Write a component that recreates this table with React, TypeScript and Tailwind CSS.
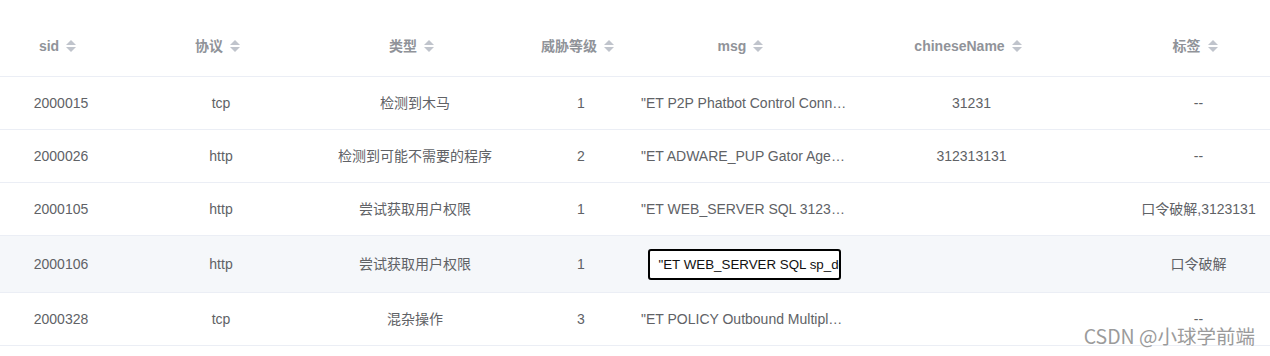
const columns = [
  { key: 'sid', label: 'sid' },
  { key: 'protocol', label: '协议' },
  { key: 'type', label: '类型' },
  { key: 'level', label: '威胁等级' },
  { key: 'msg', label: 'msg' },
  { key: 'chineseName', label: 'chineseName' },
  { key: 'tag', label: '标签' },
];

const rows = [
  { sid: '2000015', protocol: 'tcp', type: '检测到木马', level: '1', msg: '"ET P2P Phatbot Control Connect"', chineseName: '31231', tag: '--' },
  { sid: '2000026', protocol: 'http', type: '检测到可能不需要的程序', level: '2', msg: '"ET ADWARE_PUP Gator Agent Traffic"', chineseName: '312313131', tag: '--' },
  { sid: '2000105', protocol: 'http', type: '尝试获取用户权限', level: '1', msg: '"ET WEB_SERVER SQL 3123131312"', chineseName: '', tag: '口令破解,3123131' },
  { sid: '2000106', protocol: 'http', type: '尝试获取用户权限', level: '1', msg: '"ET WEB_SERVER SQL sp_delete_alert"', chineseName: '', tag: '口令破解', editing: true },
  { sid: '2000328', protocol: 'tcp', type: '混杂操作', level: '3', msg: '"ET POLICY Outbound Multiple Non-SMTP Server Emails"', chineseName: '', tag: '--' },
];

const gridCols = 'grid grid-cols-[122px_198px_190px_142px_184px_291px_143px]';

function SortCaret() {
  return (
    <svg width="24" height="12" viewBox="0 0 24 12" className="shrink-0">
      <polygon points="7,5 12,0 17,5" fill="#c0c4cc" />
      <polygon points="7,7 17,7 12,12" fill="#c0c4cc" />
    </svg>
  );
}

export default function App() {
  return (
    <div
      className="relative w-[1270px] h-[356px] overflow-hidden bg-white pt-4 text-[14px]"
      style={{ fontFamily: '"Liberation Sans", Arial, "Noto Sans CJK SC", sans-serif' }}
    >
      {/* Header */}
      <div className={`${gridCols} h-[61px] border-b border-[#ebeef5]`}>
        {columns.map((col, i) => (
          <div
            key={col.key}
            className={`flex items-center justify-center font-bold text-[#909399] ${i === 5 ? 'pr-[20px]' : ''}`}
          >
            <span>{col.label}</span>
            <SortCaret />
          </div>
        ))}
      </div>

      {/* Body */}
      {rows.map((row) => (
        <div
          key={row.sid}
          className={`${gridCols} border-b border-[#ebeef5] text-[#606266] ${
            row.editing ? 'h-[57px] bg-[#f5f7fa]' : 'h-[53px]'
          }`}
        >
          <div className="flex items-center justify-center">{row.sid}</div>
          <div className="flex items-center justify-center">{row.protocol}</div>
          <div className="flex items-center justify-center whitespace-nowrap">{row.type}</div>
          <div className="flex items-center justify-center">{row.level}</div>
          <div className="flex items-center justify-center overflow-visible">
            {row.editing ? (
              <div className="w-[193px] h-[31px] shrink-0 overflow-hidden whitespace-nowrap rounded-[3px] border-2 border-black bg-white pl-[9px] text-[13.33px] leading-[27px] text-[#111]">
                {row.msg}
              </div>
            ) : (
              <div className="w-[206px] shrink-0 truncate">{row.msg}</div>
            )}
          </div>
          <div className="flex items-center justify-center pr-[20px]">{row.chineseName}</div>
          <div className="flex items-center justify-center whitespace-nowrap">{row.tag}</div>
        </div>
      ))}

      {/* Watermark */}
      <div
        className="absolute right-[15px] top-[326px] text-[19.5px] leading-none text-[#9b9b9b]"
        style={{ fontFamily: '"Noto Sans CJK SC", sans-serif', textShadow: '0 0 2px #fff' }}
      >
        CSDN @小球学前端
      </div>
    </div>
  );
}
